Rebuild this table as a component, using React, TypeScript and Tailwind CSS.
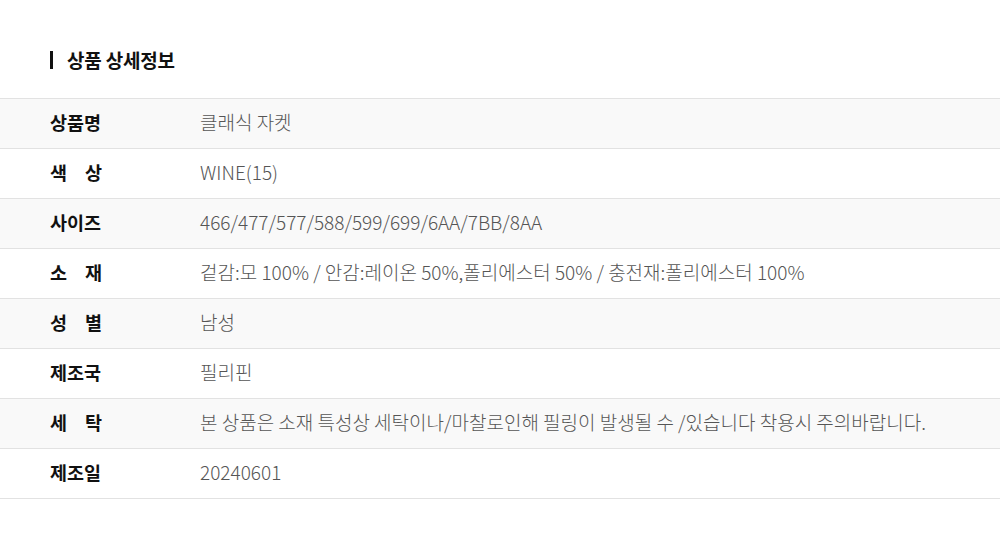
import React from "react";

const rows: { label: string; spaced?: boolean; value: string }[] = [
  { label: "상품명", value: "클래식 자켓" },
  { label: "색상", spaced: true, value: "WINE(15)" },
  { label: "사이즈", value: "466/477/577/588/599/699/6AA/7BB/8AA" },
  { label: "소재", spaced: true, value: "겉감:모 100% / 안감:레이온 50%,폴리에스터 50% / 충전재:폴리에스터 100%" },
  { label: "성별", spaced: true, value: "남성" },
  { label: "제조국", value: "필리핀" },
  { label: "세탁", spaced: true, value: "본 상품은 소재 특성상 세탁이나/마찰로인해 필링이 발생될 수 /있습니다 착용시 주의바랍니다." },
  { label: "제조일", value: "20240601" },
];

export default function App() {
  return (
    <div
      className="w-[1000px] h-[548px] bg-white pt-[49px]"
      style={{ fontFamily: '"Noto Sans CJK KR", "Noto Sans", sans-serif' }}
    >
      <div className="flex items-center px-[50px] h-[22px]">
        <div className="w-[3px] h-[18px] bg-[#111]" />
        <h2 className="ml-[14px] text-[19px] font-bold text-[#111] tracking-[-0.2px]">상품 상세정보</h2>
      </div>
      <div className="mt-[27px] border-t border-[#e2e2e2]">
        {rows.map((r, i) => (
          <div
            key={i}
            className={`flex items-center h-[50px] border-b border-[#e2e2e2] ${i % 2 === 0 ? "bg-[#f9f9f9]" : "bg-white"}`}
          >
            <div className="w-[200px] pl-[50px] shrink-0 pb-[2px]">
              {r.spaced ? (
                <div className="w-[52px] flex justify-between text-[18.5px] font-bold text-[#111]">
                  <span>{r.label[0]}</span>
                  <span>{r.label[1]}</span>
                </div>
              ) : (
                <span className="text-[18.5px] font-bold text-[#111]">{r.label}</span>
              )}
            </div>
            <div className="text-[19px] font-light text-[#555] pb-[2px]">{r.value}</div>
          </div>
        ))}
      </div>
    </div>
  );
}
